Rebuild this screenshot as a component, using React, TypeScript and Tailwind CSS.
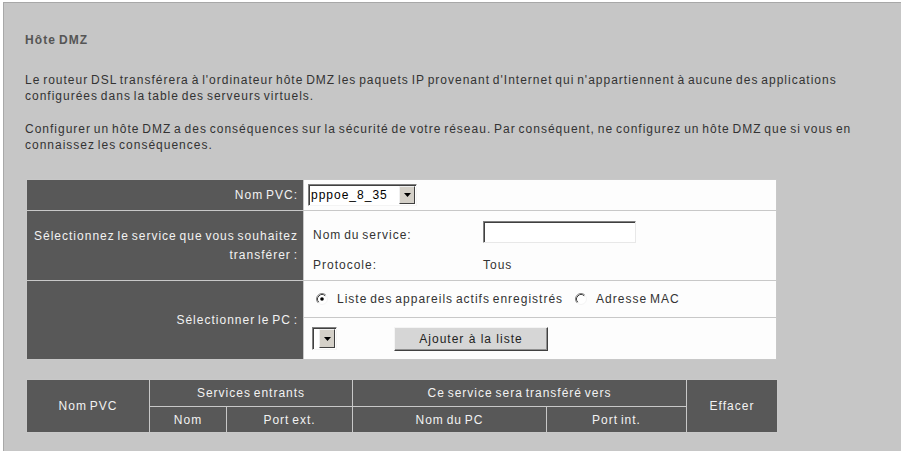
import React from 'react';

const font = { fontFamily: '"Liberation Sans", Arial, sans-serif' };

const Radio = ({ checked = false }: { checked?: boolean }) => (
  <svg width="12" height="12" viewBox="0 0 12 12" className="shrink-0">
    <circle cx="6" cy="6" r="5" fill="#ffffff" />
    <path d="M2.11 9.89 A5.5 5.5 0 0 1 9.89 2.11" fill="none" stroke="#808080" strokeWidth="1" />
    <path d="M9.89 2.11 A5.5 5.5 0 0 1 2.11 9.89" fill="none" stroke="#f4f4f4" strokeWidth="1" />
    <path d="M2.82 9.18 A4.5 4.5 0 0 1 9.18 2.82" fill="none" stroke="#404040" strokeWidth="1" />
    {checked && <circle cx="6" cy="6" r="1.8" fill="#000000" />}
  </svg>
);

const DropButton = () => (
  <span className="flex w-[16px] shrink-0 items-center justify-center border border-t-[#f0f0f0] border-l-[#f0f0f0] border-r-[#404040] border-b-[#404040] bg-[#d4d0c8]">
    <svg width="7" height="4" viewBox="0 0 7 4">
      <path d="M0 0 H7 L3.5 4 Z" fill="#000000" />
    </svg>
  </span>
);

const ClassicSelect = ({ value, className }: { value?: string; className: string }) => (
  <div
    className={`flex items-stretch border border-t-[#808080] border-l-[#808080] border-r-[#f4f4f4] border-b-[#f4f4f4] bg-white p-px shadow-[inset_1px_1px_0_#404040] ${className}`}
  >
    <span className="flex flex-1 items-center pl-[1px] text-[12px] text-black">{value}</span>
    <DropButton />
  </div>
);

const darkCell = 'border border-[#c8c8c8] bg-[#585858] text-right align-middle whitespace-nowrap text-[#f2f2f2]';
const lightCell = 'border border-[#c8c8c8] bg-[#fdfdfd] align-middle whitespace-nowrap text-[#333333]';
const headCell = 'border border-[#c8c8c8] bg-[#585858] text-center align-middle font-normal text-[#f2f2f2]';

export default function App() {
  return (
    <div
      className="h-[451px] w-[901px] overflow-hidden bg-white pl-[3px] pt-[2px] text-[12px] tracking-[1px] [word-spacing:-1.5px]"
      style={font}
    >
      <div className="h-full border-l border-t border-[#a8a8a8] bg-[#c6c6c6] pl-[21px] pt-[30px] leading-4 text-[#333333]">
        <h1 className="text-[12px] font-bold leading-[15px] tracking-[1.1px] text-[#555555]">Hôte DMZ</h1>

        <p className="mt-[24px] w-[850px]">
          Le routeur DSL transférera à l'ordinateur hôte DMZ les paquets IP provenant d'Internet qui n'appartiennent à aucune des applications configurées dans la table des serveurs virtuels.
        </p>

        <p className="mt-[17px] w-[860px]">
          Configurer un hôte DMZ a des conséquences sur la sécurité de votre réseau. Par conséquent, ne configurez un hôte DMZ que si vous en connaissez les conséquences.
        </p>

        <table className="ml-px mt-[26px] w-[751px] table-fixed border-collapse">
          <colgroup>
            <col className="w-[277px]" />
            <col />
          </colgroup>
          <tbody>
            <tr className="h-[31px]">
              <td className={`${darkCell} pr-[5px]`}>Nom PVC:</td>
              <td className={`${lightCell} pl-[4px]`}>
                <ClassicSelect value="pppoe_8_35" className="h-[22px] w-[109px]" />
              </td>
            </tr>
            <tr className="h-[70px]">
              <td className={`${darkCell} pr-[5px] leading-[19px]`}>
                Sélectionnez le service que vous souhaitez
                <br />
                transférer :
              </td>
              <td className={`${lightCell} pl-[9px] align-top`}>
                <div className="mt-[10px] flex h-[22px] items-end">
                  <span className="w-[170px] leading-[15px]">Nom du service:</span>
                  <div className="h-[22px] w-[153px] border border-t-[#808080] border-l-[#808080] border-r-[#e8e8e8] border-b-[#e8e8e8] bg-white shadow-[inset_1px_1px_0_#404040]" />
                </div>
                <div className="mt-[15px] flex leading-[15px]">
                  <span className="w-[170px]">Protocole:</span>
                  <span>Tous</span>
                </div>
              </td>
            </tr>
            <tr className="h-[37px]">
              <td rowSpan={2} className={`${darkCell} pr-[5px]`}>
                Sélectionner le PC :
              </td>
              <td className={`${lightCell} pl-[12px]`}>
                <div className="flex items-center">
                  <Radio checked />
                  <span className="ml-[9px]">Liste des appareils actifs enregistrés</span>
                  <span className="ml-[12px]">
                    <Radio />
                  </span>
                  <span className="ml-[9px]">Adresse MAC</span>
                </div>
              </td>
            </tr>
            <tr className="h-[42px]">
              <td className={`${lightCell} pl-[8px]`}>
                <div className="flex items-center">
                  <ClassicSelect className="h-[23px] w-[25px]" />
                  <button className="ml-[57px] h-[24px] w-[154px] border border-t-[#f4f4f4] border-l-[#f4f4f4] border-r-[#404040] border-b-[#404040] bg-[#d6d6d6] text-[12px] text-[#222222] shadow-[inset_-1px_-1px_0_#909090]">
                    Ajouter à la liste
                  </button>
                </div>
              </td>
            </tr>
          </tbody>
        </table>

        <table className="ml-px mt-[19px] w-[751px] table-fixed border-collapse">
          <colgroup>
            <col className="w-[123px]" />
            <col className="w-[77px]" />
            <col className="w-[126px]" />
            <col className="w-[194px]" />
            <col className="w-[140px]" />
            <col className="w-[91px]" />
          </colgroup>
          <thead>
            <tr className="h-[27px]">
              <th rowSpan={2} className={headCell}>Nom PVC</th>
              <th colSpan={2} className={headCell}>Services entrants</th>
              <th colSpan={2} className={headCell}>Ce service sera transféré vers</th>
              <th rowSpan={2} className={headCell}>Effacer</th>
            </tr>
            <tr className="h-[26px]">
              <th className={headCell}>Nom</th>
              <th className={headCell}>Port ext.</th>
              <th className={headCell}>Nom du PC</th>
              <th className={headCell}>Port int.</th>
            </tr>
          </thead>
        </table>
      </div>
    </div>
  );
}
